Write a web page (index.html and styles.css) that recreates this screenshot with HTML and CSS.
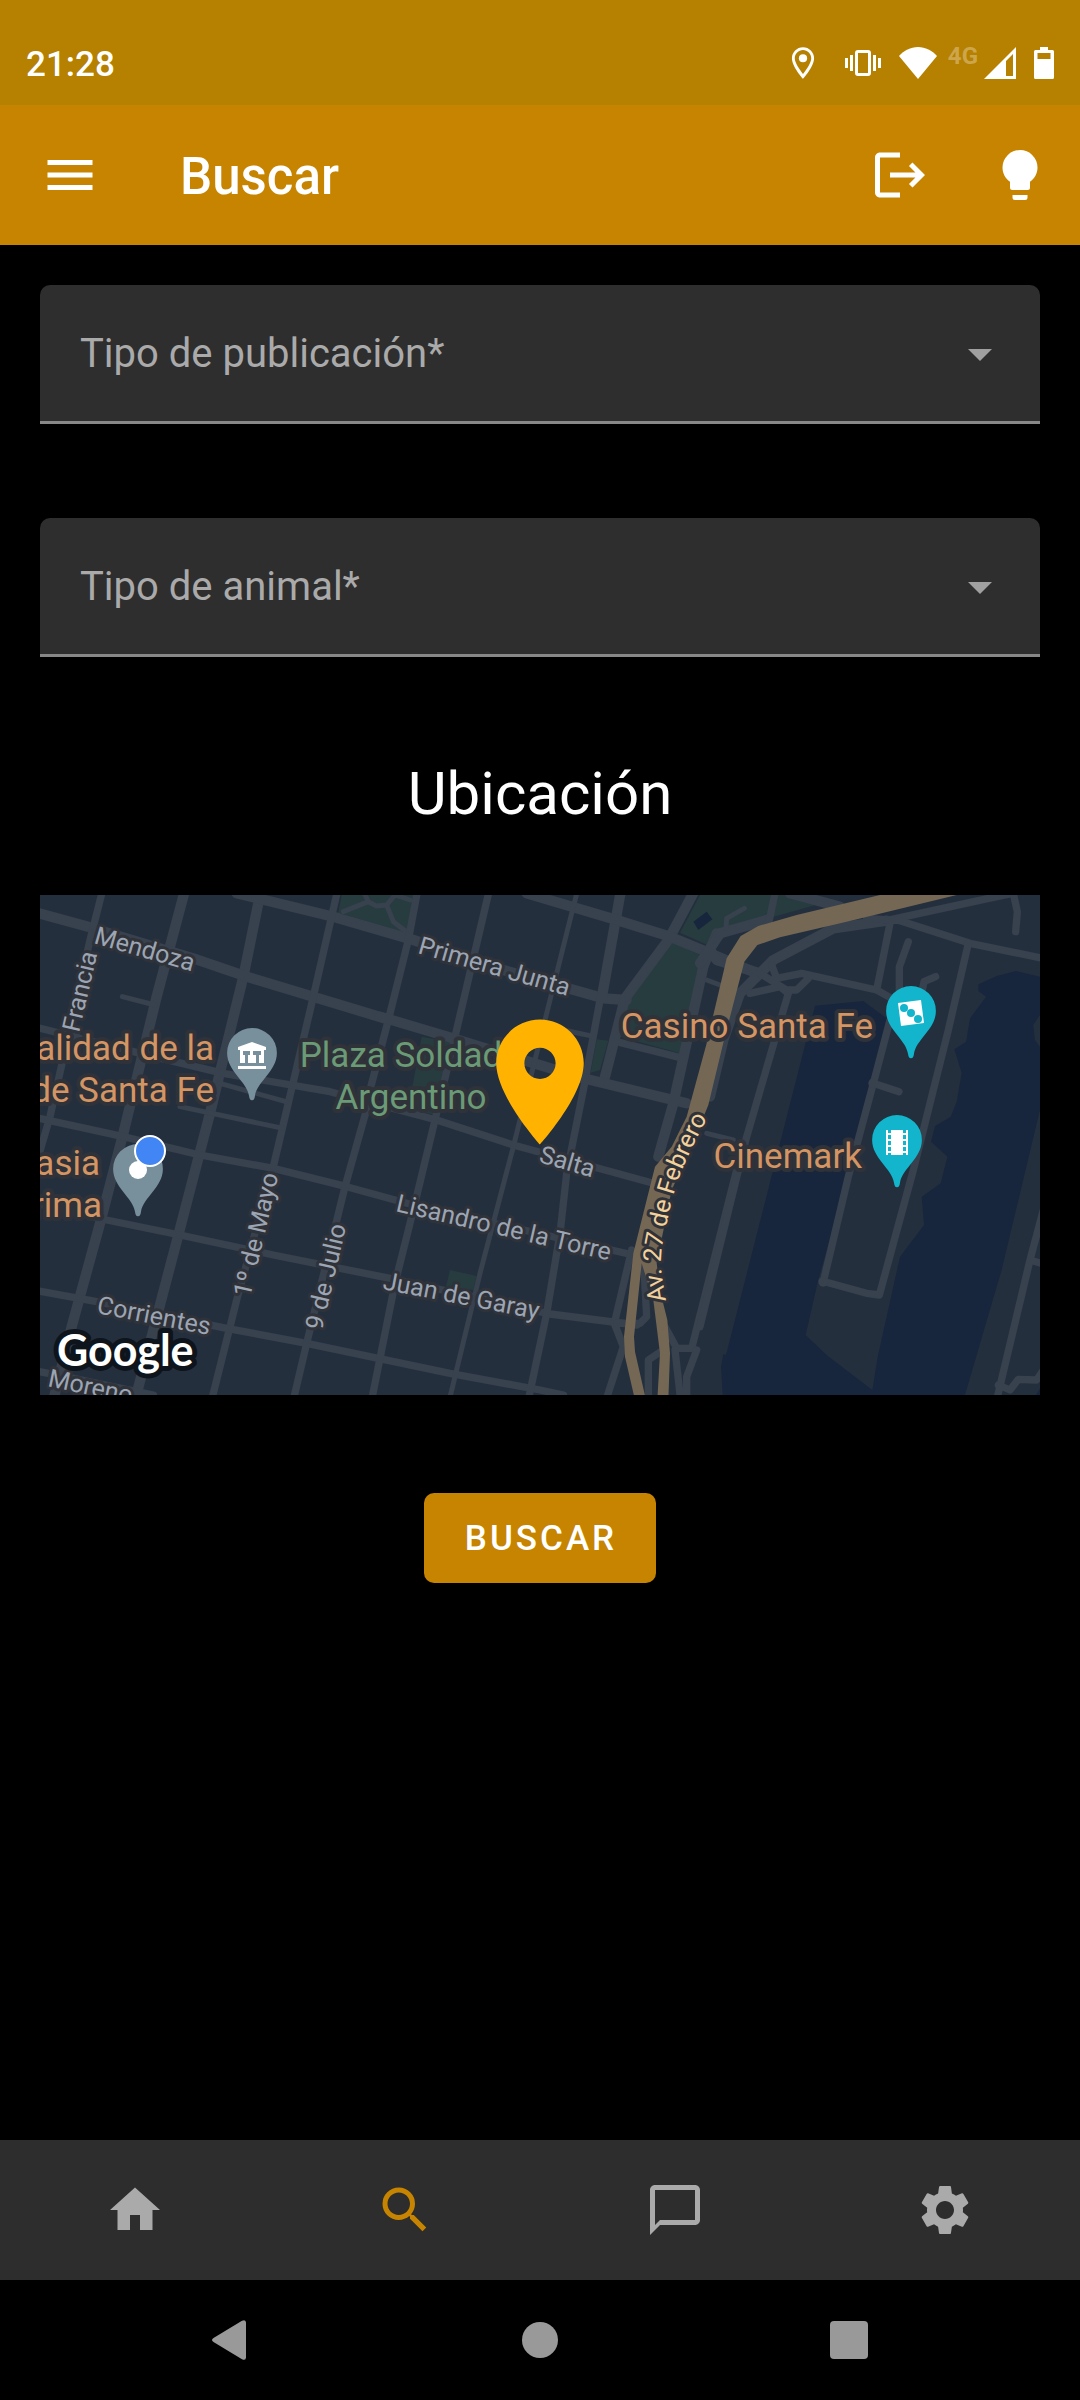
FILE: index.html
```html
<!DOCTYPE html>
<html lang="es">
<head>
<meta charset="utf-8">
<meta name="viewport" content="width=device-width, initial-scale=1">
<title>Buscar</title>
<link rel="stylesheet" href="styles.css">
</head>
<body>
<div class="status-bar">
  <time class="clock">21:28</time>
  <div class="status-icons">
    <svg class="status-location" viewBox="0 0 24 24" width="38" height="38"><path d="M12 2C8.13 2 5 5.13 5 9c0 5.25 7 13 7 13s7-7.75 7-13c0-3.87-3.13-7-7-7zM6.8 9c0-2.86 2.34-5.2 5.2-5.2s5.2 2.34 5.2 5.2c0 2.88-3 7.19-5.2 9.88C9.92 16.21 6.8 11.85 6.8 9z"/><circle cx="12" cy="9" r="2.6"/></svg>
    <svg class="status-vibrate" viewBox="0 0 36 26" width="36" height="26"><path d="M0 8h3v10H0zM5 5h3v16H5zM28 5h3v16h-3zM33 8h3v10h-3z"/><rect x="11.500" y="1.500" width="13" height="23" rx="1.500" fill="none" stroke="#fff" stroke-width="3"/></svg>
    <svg class="status-wifi" viewBox="0 0 38 32" width="38" height="32"><path d="M19 32L0 9C5 3.500 11.500 0 19 0s14 3.500 19 9z"/></svg>
    <span class="network">4G</span>
    <svg class="status-signal" viewBox="0 0 32 32" width="32" height="32"><path fill-rule="evenodd" d="M0 32L32 0v32zM22 14v15h7V7z"/></svg>
    <svg viewBox="0 0 20 32" width="20" height="32"><path fill-rule="evenodd" d="M6 0h8v3h4.500q1.500 0 1.500 1.500v26q0 1.500-1.500 1.500h-17Q0 32 0 30.500v-26Q0 3 1.500 3H6zM3.500 6v6h13V6z"/></svg>
  </div>
</div>

<header class="app-bar">
  <button class="icon-button" type="button" aria-label="Menú"><svg class="icon" viewBox="0 0 24 24"><path d="M3 6h18v2H3zM3 11h18v2H3zM3 16h18v2H3z"/></svg></button>
  <h1 class="app-title">Buscar</h1>
  <button class="icon-button" type="button" aria-label="Cerrar sesión"><svg class="icon" viewBox="0 0 24 24"><path d="M12 3v2H4v14h8v2H4c-1.100 0-2-.9-2-2V5c0-1.100.9-2 2-2zM17 7l-1.410 1.410L18.170 11H8v2h10.170l-2.580 2.580L17 17l5-5z"/></svg></button>
  <button class="icon-button" type="button" aria-label="Cambiar tema"><svg class="icon" viewBox="0 0 24 24"><path d="M12 2A7 7 0 0 0 5 9C5 11.380 6.190 13.470 8 14.740V17A1 1 0 0 0 9 18H15A1 1 0 0 0 16 17V14.740C17.810 13.470 19 11.380 19 9A7 7 0 0 0 12 2M9 21A1 1 0 0 0 10 22H14A1 1 0 0 0 15 21V20H9V21Z"/></svg></button>
</header>

<main class="content">
  <form class="search-form">
    <div class="field">
      <label class="field-label" for="post-type">Tipo de publicación*</label>
      <select class="field-select" id="post-type" required><option value=""></option></select>
      <svg class="field-arrow" viewBox="0 0 24 12" width="24" height="12"><path d="M0 0h24L12 12z"/></svg>
    </div>
    <div class="field">
      <label class="field-label" for="animal-type">Tipo de animal*</label>
      <select class="field-select" id="animal-type" required><option value=""></option></select>
      <svg class="field-arrow" viewBox="0 0 24 12" width="24" height="12"><path d="M0 0h24L12 12z"/></svg>
    </div>

    <h2 class="section-title">Ubicación</h2>

    <div class="map">
      <svg class="map-canvas" viewBox="0 0 1000 500" preserveAspectRatio="xMidYMid slice">
        <defs>
          <path id="avenue-line" d="M626 406C623 385 619 372 622 352C627 325 632 302 640 280C649 258 659 238 670 218"/>
          <symbol id="poi-pin" viewBox="-3 -3 156 226"><path d="M75 218c-6 0-8-6-9-14C59 160 0 130 0 75a75 75 0 0 1 150 0c0 55-59 85-66 129-1 8-3 14-9 14z"/></symbol>
        </defs>
        <!-- terrain and streets, drawn at three units per map unit -->
        <svg viewBox="0 0 3000 1500" width="1000" height="500">
          <g transform="translate(1980 -15)">
            <path class="water" d="M345 347L490 333L560 385L520 580L355 1170L317 1335L380 1395L517 1500L533 1400L600 1100L672 1005L665 920L722 880L742 800L693 755L705 708L752 680L770 635L785 548L763 478L798 455L810 385L858 320L835 303V283L890 258L948 243L1020 260V375L1000 405L1005 450L1020 470V660L905 1140L795 1515H68L63 1430L70 1392L78 1395Z"/>
            <path class="water" d="M1020 1495L1008 1515H1020Z"/>
          </g>
          <g class="park" transform="translate(990 -15)">
            <path d="M-85 15L-95 68L112 130L138 15Z"/>
            <path d="M905 155L990 195V230L930 490L750 440L775 330Z"/>
            <path d="M990 15L930 128L1013 165L1070 115L1195 85L1345 43L1260 15Z"/>
            <path d="M680 448L715 452L690 540L662 548Z"/>
            <path d="M155 440L240 455L195 675L115 655Z"/>
            <path d="M240 1140L320 1158L310 1200L228 1190Z"/>
            <path class="water" d="M970 95L1010 65L1027 88L985 120Z"/>
          </g>
          <g class="road" transform="translate(0 -15)">
            <g class="wide">
              <path d="M435 0L350 320L250 730L180 1000L95 1310L40 1530"/>
              <path d="M663 0L610 260L510 670L415 1035L285 1530"/>
              <path d="M-10 68L150 112L460 205L620 260L1050 390"/>
              <path d="M590 10L880 80L1120 150L1390 240L1690 325L1760 330"/>
            </g>
            <path d="M188 0L150 150L30 680L-5 800"/>
            <path d="M893 0L820 320L700 830L590 1230L515 1530"/>
            <path d="M-10 412L280 485L550 550L870 605L1000 640L1190 690L1420 765L1840 880"/>
            <path d="M-10 683L250 740L480 795L700 835L920 890L1120 945L1780 1095"/>
            <path d="M-10 940L200 990L420 1035L700 1095L1050 1165L1530 1272L1790 1305"/>
            <path d="M-10 1202L170 1235L560 1315L800 1360L1230 1450L1500 1500L1570 1515"/>
            <path d="M-10 1443L100 1465L340 1515"/>
            <g class="narrow">
              <path d="M247 320L345 345M540 580L738 635M420 650L730 715"/>
              <path d="M910 65L985 35L975 15M985 35L1010 48L1040 45L1065 15M1040 45L1060 95L1105 130M1065 15L1110 30"/>
            </g>
          </g>
          <g class="road" transform="translate(990 -15)">
            <path d="M143 0L115 150L55 390L0 600L-5 640L-75 890L-190 1360L-230 1530"/>
            <path d="M358 0L255 440L195 690L130 960L75 1180L5 1530"/>
            <path d="M690 330L640 600L590 850L570 1030L530 1270L475 1530"/>
            <path d="M740 455L940 505M785 1080L733 1300L760 1370L708 1530"/>
            <path d="M820 1100L830 1280L810 1300L740 1300M885 1310L920 1375H965L1110 800"/>
            <path d="M880 1380L835 1410V1530M915 1380L932 1530M980 1380L950 1460V1530"/>
            <g class="wide">
              <path d="M753 0L695 325"/>
              <path d="M975 0L895 150L765 325L705 560"/>
              <path d="M30 380L250 445L460 510L640 565L950 640"/>
              <path d="M470 10L740 90L900 140L1020 190L1160 250"/>
              <path d="M1040 130L1000 230L910 640L865 800"/>
            </g>
            <g class="narrow">
              <path d="M623 0L600 90L490 530L430 770L330 1150L238 1530"/>
              <path d="M580 420L660 437M1010 730L1090 750M1010 270L1050 285"/>
            </g>
          </g>
          <g class="road" transform="translate(1980 -15)">
            <g class="wide">
              <path d="M0 220L60 130L200 90M30 180L50 210L180 250"/>
              <path d="M270 10L420 50M30 620L70 450L120 310L220 210L400 115L560 92"/>
            </g>
            <path d="M560 92L600 83L880 22L930 12"/>
            <path d="M225 10L208 90M500 85L600 92L810 160L1030 205M570 100L530 300L575 325"/>
            <path d="M215 225L230 265L305 250L530 300M180 250L260 300H290L325 265M150 310L240 290L265 310L140 740L0 1310"/>
            <path d="M805 160L745 420L640 840L538 1215L500 1210L385 1178"/>
            <path d="M570 390L520 580L445 860L370 1175M520 580L597 605"/>
            <path d="M625 155L598 230V310M707 260L672 275L665 310M940 10L952 65L947 125"/>
            <path d="M1030 960L990 1110L890 1530M990 1110L1030 1122M895 1485L930 1500L955 1468L1010 1470L1030 1440"/>
            <g class="narrow"><path d="M78 115L80 85L133 55"/></g>
            <circle cx="520" cy="580" r="15"/><circle cx="370" cy="1175" r="15"/>
          </g>
          <g class="highway" transform="translate(990 -15)">
            <path d="M1870 -10H1640L1530 15L1280 75L1165 108L1112 138L1070 205L1010 460L950 680L905 770L855 830L790 1090L762 1340L765 1400L795 1530H828L795 1385L792 1340L815 1120L850 1230L870 1390L862 1530H895L900 1390L892 1290L872 1210L860 1120L905 900L960 780L1015 645L1062 450L1123 215L1162 165L1230 142L1430 95L1760 15Z"/>
          </g>
        </svg>
        <g class="street-names">
          <text transform="translate(53 48) rotate(16)">Mendoza</text>
          <text transform="translate(39 138) rotate(-77)">Francia</text>
          <text transform="translate(377 58) rotate(16)">Primera Junta</text>
          <text transform="translate(498 267) rotate(16)">Salta</text>
          <text transform="translate(355 316) rotate(13)">Lisandro de la Torre</text>
          <text transform="translate(342 394) rotate(11)">Juan de Garay</text>
          <text transform="translate(210 403) rotate(-77)">1º de Mayo</text>
          <text transform="translate(282 436) rotate(-77)">9 de Julio</text>
          <text transform="translate(56 418) rotate(11)">Corrientes</text>
          <text transform="translate(7 491) rotate(12)">Moreno</text>
          <text class="avenue-name"><textPath href="#avenue-line">Av. 27 de Febrero</textPath></text>
        </g>
        <g class="place-names">
          <text x="174" y="165">alidad de la</text>
          <text x="174" y="207">de Santa Fe</text>
          <text x="60" y="280">asia</text>
          <text x="62" y="322">rima</text>
          <text x="833" y="143">Casino Santa Fe</text>
          <text x="822" y="273">Cinemark</text>
        </g>
        <g class="park-names">
          <text x="371" y="172">Plaza Soldado</text>
          <text x="371" y="214">Argentino</text>
        </g>
        <g class="pin-grey">
          <use href="#poi-pin" x="186" y="132" width="52" height="75"/>
          <use href="#poi-pin" x="72" y="248" width="52" height="75"/>
        </g>
        <g class="pin-teal">
          <use href="#poi-pin" x="845" y="90" width="52" height="75"/>
          <use href="#poi-pin" x="831" y="219" width="52" height="75"/>
        </g>
        <g fill="#fff">
          <path d="M198 155v-3l14-5 14 5v3h-2v13h-5v-8h-3v8h-8v-8h-3v8h-5v-13zM198 171h28v3h-28z"/>
          <path class="museum-gap" d="M203 156h7v4h-7zM213 156h8v4h-8z"/>
          <circle cx="98" cy="275" r="9"/>
          <path d="M858 108l23-3 3 23-23 3z"/>
          <path d="M846 235h22v25h-22z"/>
        </g>
        <g class="pin-teal-detail">
          <circle cx="864" cy="113" r="4"/><circle cx="871" cy="118" r="4"/><circle cx="878" cy="124" r="4"/>
          <path d="M849.500 234v27M864.500 234v27"/>
        </g>
        <circle class="my-location" cx="110" cy="256" r="15"/>
        <text class="map-brand" x="17" y="471">Google</text>
      </svg>
      <svg class="map-marker" viewBox="0 0 24 24" width="150" height="150"><path d="M12 2C8.130 2 5 5.130 5 9c0 5.250 7 13 7 13s7-7.750 7-13c0-3.870-3.130-7-7-7zm0 9.500c-1.380 0-2.500-1.120-2.500-2.500s1.120-2.500 2.500-2.500 2.500 1.120 2.500 2.500-1.120 2.500-2.500 2.500z"/></svg>
    </div>

    <button class="submit" type="button">BUSCAR</button>
  </form>
</main>

<nav class="tabs">
  <a class="tab" href="#inicio" aria-label="Inicio"><svg class="icon" viewBox="0 0 24 24"><path d="M10 20v-6h4v6h5v-8h3L12 3 2 12h3v8z"/></svg></a>
  <a class="tab tab-active" href="#buscar" aria-label="Buscar"><svg class="icon" viewBox="0 0 24 24"><path d="M9.500 3A6.500 6.500 0 0 1 16 9.500C16 11.110 15.410 12.590 14.440 13.730L14.710 14H15.500L20.500 19L19 20.500L14 15.500V14.710L13.730 14.440C12.590 15.410 11.110 16 9.500 16A6.500 6.500 0 0 1 3 9.500A6.500 6.500 0 0 1 9.500 3M9.500 5C7 5 5 7 5 9.500C5 12 7 14 9.500 14C12 14 14 12 14 9.500C14 7 12 5 9.500 5Z"/></svg></a>
  <a class="tab" href="#mensajes" aria-label="Mensajes"><svg class="icon" viewBox="0 0 24 24"><path d="M20 2H4c-1.100 0-2 .9-2 2v18l4-4h14c1.100 0 2-.9 2-2V4c0-1.100-.9-2-2-2zm0 14H6l-2 2V4h16v12z"/></svg></a>
  <a class="tab" href="#ajustes" aria-label="Ajustes"><svg class="icon" viewBox="0 0 24 24"><path d="M19.140 12.940c.04-.3.06-.61.06-.94 0-.32-.02-.64-.07-.94l2.030-1.580c.18-.14.23-.41.12-.61l-1.920-3.320c-.12-.22-.37-.29-.59-.22l-2.390.96c-.5-.38-1.030-.7-1.620-.94L14.400 2.810c-.04-.24-.24-.41-.48-.41h-3.840c-.24 0-.43.17-.47.41L9.250 5.350C8.660 5.590 8.120 5.920 7.630 6.290L5.240 5.330c-.22-.08-.47 0-.59.22L2.740 8.870c-.12.21-.08.47.12.61l2.030 1.580C4.840 11.360 4.800 11.690 4.800 12s.02.64.07.94l-2.030 1.580c-.18.14-.23.41-.12.61l1.920 3.320c.12.22.37.29.59.22l2.390-.96c.5.38 1.030.7 1.620.94l.36 2.540c.05.24.24.41.48.41h3.840c.24 0 .44-.17.47-.41l.36-2.540c.59-.24 1.130-.56 1.620-.94l2.390.96c.22.08.47 0 .59-.22l1.920-3.320c.12-.22.07-.47-.12-.61L19.140 12.940zM12 15.600c-1.980 0-3.600-1.620-3.600-3.600s1.620-3.600 3.600-3.600 3.600 1.620 3.600 3.600-1.620 3.600-3.600 3.600z"/></svg></a>
</nav>

<div class="system-nav">
  <button class="system-button" type="button" aria-label="Atrás"><svg viewBox="0 0 40 40" width="40" height="40"><path d="M3.500 22q-3-2 0-4L32 .7q4-1.700 4 2v34.600q0 3.700-4 2z"/></svg></button>
  <button class="system-button" type="button" aria-label="Pantalla de inicio"><svg viewBox="0 0 40 40" width="40" height="40"><circle cx="20" cy="20" r="18"/></svg></button>
  <button class="system-button" type="button" aria-label="Aplicaciones recientes"><svg viewBox="0 0 40 40" width="40" height="40"><rect x="0" y="1" width="38" height="38" rx="4"/></svg></button>
</div>
</body>
</html>
```
FILE: styles.css
```css
* {
  box-sizing: border-box;
}

body {
  margin: 0;
  min-height: 100vh;
  display: flex;
  flex-direction: column;
  background: #000;
  color: #fff;
  font-family: Roboto, "Liberation Sans", sans-serif;
}

button {
  border: 0;
  padding: 0;
  background: none;
  color: inherit;
  font-family: inherit;
}

svg {
  display: block;
  flex-shrink: 0;
  fill: currentColor;
}

.icon {
  width: 60px;
  height: 60px;
}

/* Status bar */
.status-bar {
  height: 105px;
  padding: 20px 26px 0;
  display: flex;
  align-items: center;
  justify-content: space-between;
  background: #b68000;
}

.clock {
  padding-top: 3px;
  font-size: 35px;
  font-weight: 500;
}

.status-icons {
  display: flex;
  align-items: center;
}

.status-location { margin-right: 23px; }
.status-vibrate { margin-right: 18px; }
.status-wifi { margin-right: 11px; }
.status-signal { margin-right: 18px; }

.network {
  margin-right: 6px;
  padding-bottom: 14px;
  color: #cda64b;
  font-size: 24px;
  font-weight: 700;
  line-height: 28px;
}

/* App bar */
.app-bar {
  height: 140px;
  padding: 0 30px 0 40px;
  display: flex;
  align-items: center;
  gap: 60px;
  background: #c68400;
}

.app-title {
  flex: 1;
  margin: 0 0 0 20px;
  padding-top: 2px;
  font-size: 51px;
  font-weight: 500;
}

/* Search form */
.content {
  flex: 1;
  padding: 40px;
}

.search-form {
  display: flex;
  flex-direction: column;
}

.field {
  display: grid;
  height: 139px;
  margin-bottom: 94px;
  align-items: center;
  border-bottom: 3px solid #888;
  border-radius: 10px 10px 0 0;
  background: #2e2e2e;
}

.field-label,
.field-select,
.field-arrow {
  grid-area: 1 / 1;
}

.field-label {
  padding-left: 40px;
  color: #aaa;
  font-size: 40px;
  pointer-events: none;
  z-index: 1;
}

.field-select {
  width: 100%;
  height: 100%;
  border: 0;
  appearance: none;
  background: transparent;
  color: #fff;
  font: inherit;
}

.field-arrow {
  margin: 3px 48px 0 0;
  justify-self: end;
  color: #a0a0a0;
  pointer-events: none;
}

.section-title {
  margin: 2px 0 60px;
  font-size: 60px;
  font-weight: 400;
  line-height: 82px;
  text-align: center;
}

.submit {
  align-self: center;
  margin-top: 98px;
  padding: 2px 39px 0 41px;
  border-radius: 10px;
  background: #c68400;
  font-size: 35px;
  font-weight: 500;
  line-height: 88px;
  letter-spacing: 3px;
}

/* Map */
.map {
  position: relative;
  aspect-ratio: 2 / 1;
  overflow: hidden;
  background: #242f3e;
}

.map-canvas {
  width: 100%;
  height: 100%;
}

.map-marker {
  position: absolute;
  left: 50%;
  bottom: 50%;
  transform: translate(-50%, 12px);
  color: #ffb300;
}

.water { fill: #17263c; }

.park { fill: #263c3f; }

.road {
  fill: #38414e;
}

.road path {
  fill: none;
  stroke: #38414e;
  stroke-width: 22px;
  stroke-linecap: round;
  stroke-linejoin: round;
}

.road .wide path { stroke-width: 31px; }
.road .narrow path { stroke-width: 15px; }

.highway { fill: #746855; }

.map-canvas text {
  paint-order: stroke;
  stroke: #2f3239;
  stroke-linejoin: round;
}

.street-names {
  fill: #9ca5b3;
  font-size: 25px;
  stroke-width: 6px;
}

.avenue-name {
  fill: #f3d19c;
}

.place-names,
.park-names {
  font-size: 35px;
  stroke-width: 8px;
}

.place-names {
  fill: #d59563;
  text-anchor: end;
}

.park-names {
  fill: #6b9a76;
  text-anchor: middle;
}

.pin-grey { fill: #78909c; }
.pin-teal { fill: #12b5cb; }
.museum-gap { fill: #78909c; }

.pin-teal-detail {
  fill: #12b5cb;
}

.pin-teal-detail path {
  stroke: #12b5cb;
  stroke-width: 3px;
  stroke-dasharray: 4 2;
}

.my-location {
  fill: #4285f4;
  stroke: #fff;
  stroke-width: 2px;
}

.map-canvas .map-brand {
  fill: #fff;
  stroke: #0e141c;
  stroke-width: 10px;
  font-family: Lato, Roboto, sans-serif;
  font-size: 43px;
  font-weight: 700;
}

/* Bottom tabs */
.tabs {
  height: 140px;
  display: grid;
  grid-template-columns: repeat(4, 1fr);
  background: #2d2d2d;
}

.tab {
  display: grid;
  place-items: center;
  color: #aaa;
}

.tab-active { color: #c68400; }

/* System navigation */
.system-nav {
  height: 120px;
  padding: 0 210px;
  display: flex;
  align-items: center;
  justify-content: space-between;
  color: #999;
}
```
